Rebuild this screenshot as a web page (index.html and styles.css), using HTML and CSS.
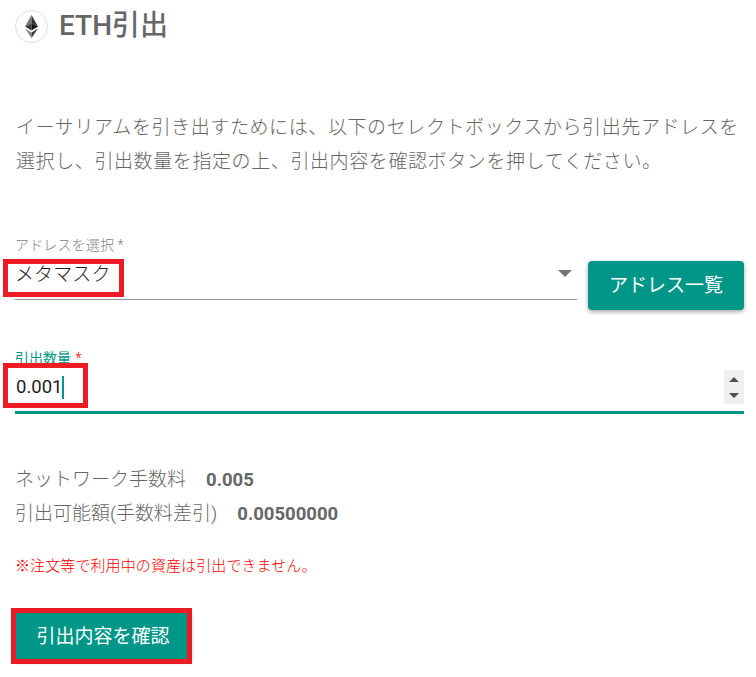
FILE: index.html
```html
<!DOCTYPE html>
<html lang="ja">
  <head>
    <meta charset="UTF-8" />
    <title>ETH引出</title>
    <link rel="stylesheet" href="styles.css">
  </head>
  <body>
    <main class="withdraw">
      <h1 class="title">
        <svg class="eth-logo" viewBox="0 0 33 33">
          <circle cx="16.5" cy="16.5" r="16" fill="#fff" stroke="#dedede" />
          <path d="M16.5 5L10 16.5l6.5-3z" fill="#777" />
          <path d="M16.5 5L23 16.5l-6.5-3z" fill="#343434" />
          <path d="M10 16.5l6.5-3v7z" fill="#393939" />
          <path d="M23 16.5l-6.5-3v7z" fill="#141414" />
          <path d="M10 18.5l6.5 4v5.5z" fill="#858585" />
          <path d="M23 18.5l-6.5 4v5.5z" fill="#3c3c3b" />
        </svg>
        <span class="title-text">ETH引出</span>
      </h1>

      <p class="lead">イーサリアムを引き出すためには、以下のセレクトボックスから引出先アドレスを<br>選択し、引出数量を指定の上、引出内容を確認ボタンを押してください。</p>

      <div class="address-row">
        <div class="field select">
          <span class="label">アドレスを選択 *</span>
          <div class="control">
            <span class="select-value">メタマスク</span>
            <svg class="arrow" viewBox="0 0 14 7"><path d="M0 0h14L7 7z" fill="#757575" /></svg>
          </div>
          <div class="mark mark-address"></div>
        </div>
        <button class="btn">アドレス一覧</button>
      </div>

      <div class="field amount">
        <span class="label">引出数量 <span class="required">*</span></span>
        <div class="control">
          <span class="amount-value">0.001</span>
          <span class="caret"></span>
          <svg class="spinner" viewBox="0 0 20 34">
            <path d="M5 12h10L10 7zM5 23h10l-5 5z" fill="#505050" />
          </svg>
        </div>
        <div class="mark mark-amount"></div>
      </div>

      <dl class="fees">
        <div class="fee"><dt>ネットワーク手数料</dt><dd>0.005</dd></div>
        <div class="fee"><dt>引出可能額(手数料差引)</dt><dd>0.00500000</dd></div>
      </dl>

      <p class="note">※注文等で利用中の資産は引出できません。</p>

      <div class="submit">
        <button class="btn btn-submit">引出内容を確認</button>
        <div class="mark mark-submit"></div>
      </div>
    </main>
  </body>
</html>
```
FILE: styles.css
```css
:root {
  --accent: #009688;
  --text: #666;
  --mark: #ed1c24;
}

* {
  box-sizing: border-box;
}

body {
  margin: 0;
  background: #fff;
  color: var(--text);
  font-family: Roboto, "Noto Sans CJK JP", sans-serif;
  font-size: 19px;
  font-weight: 300;
}

.withdraw {
  width: 729px;
  min-height: 677px;
  margin-left: 15px;
  padding-top: 6px;
}

.title {
  display: flex;
  align-items: center;
  gap: 11px;
  height: 40px;
  margin: 0;
  font-size: 28px;
  font-weight: 500;
  line-height: 40px;
}

.eth-logo {
  width: 33px;
  height: 33px;
}

.title-text {
  white-space: nowrap;
}

.lead {
  margin: 65px 0 0;
  padding-left: 1px;
  line-height: 34px;
  letter-spacing: 0.6px;
  white-space: nowrap;
}

.address-row {
  display: flex;
  gap: 11px;
  height: 74px;
  margin-top: 57px;
}

.field {
  position: relative;
}

.label {
  display: block;
  height: 18px;
  font-size: 14px;
  line-height: 18px;
  letter-spacing: 0.15px;
  color: #808080;
  white-space: nowrap;
}

.control {
  display: flex;
  align-items: center;
}

.select {
  width: 562px;
  height: 64px;
}

.select .control {
  justify-content: space-between;
  height: 46px;
  padding: 0 5px 6px 0;
  border-bottom: 1px solid #949494;
  color: #212121;
}

.select-value {
  padding-bottom: 2px;
  letter-spacing: 0.1px;
}

.arrow {
  width: 14px;
  height: 7px;
}

.btn {
  width: 156px;
  height: 49px;
  margin: 25px 0 0;
  padding: 0 0 4px;
  border: 0;
  border-radius: 4px;
  background: var(--accent);
  box-shadow: 0 2px 4px rgba(0, 0, 0, 0.35);
  color: #fff;
  font: inherit;
  font-weight: 400;
  white-space: nowrap;
}

.amount {
  margin-top: 39px;
}

.amount .label {
  letter-spacing: 0;
  color: var(--accent);
  font-weight: 400;
}

.required {
  margin-left: 1px;
  color: #f44336;
}

.amount .control {
  height: 47px;
  padding-bottom: 4px;
  border-bottom: 3px solid var(--accent);
  color: #212121;
  font-size: 18.5px;
  font-weight: 400;
}

.amount-value {
  padding-left: 1px;
}

.caret {
  width: 2px;
  height: 23px;
  background: var(--accent);
}

.spinner {
  width: 20px;
  height: 34px;
  margin-left: auto;
  background: #f0f0f0;
}

.fees {
  margin: 49px 0 0;
  line-height: 34px;
}

.fee {
  display: flex;
  gap: 20px;
}

.fee dd {
  margin: 0;
  font-size: 18.5px;
  font-weight: 700;
}

.note {
  margin: 23px 0 0;
  font-size: 15px;
  line-height: 24px;
  letter-spacing: 0.1px;
  color: #f00;
}

.submit {
  position: relative;
  margin-top: 33px;
}

.btn-submit {
  display: block;
  width: 176px;
  margin: 0;
  padding-bottom: 2px;
}

/* red frames around the values to check */
.mark {
  position: absolute;
  border: 5px solid var(--mark);
}

.mark-address {
  top: 23px;
  left: -12px;
  width: 121px;
  height: 38px;
}

.mark-amount {
  top: 14px;
  left: -12px;
  width: 85px;
  height: 45px;
}

.mark-submit {
  top: -3px;
  left: -4px;
  width: 181px;
  height: 56px;
}
```
